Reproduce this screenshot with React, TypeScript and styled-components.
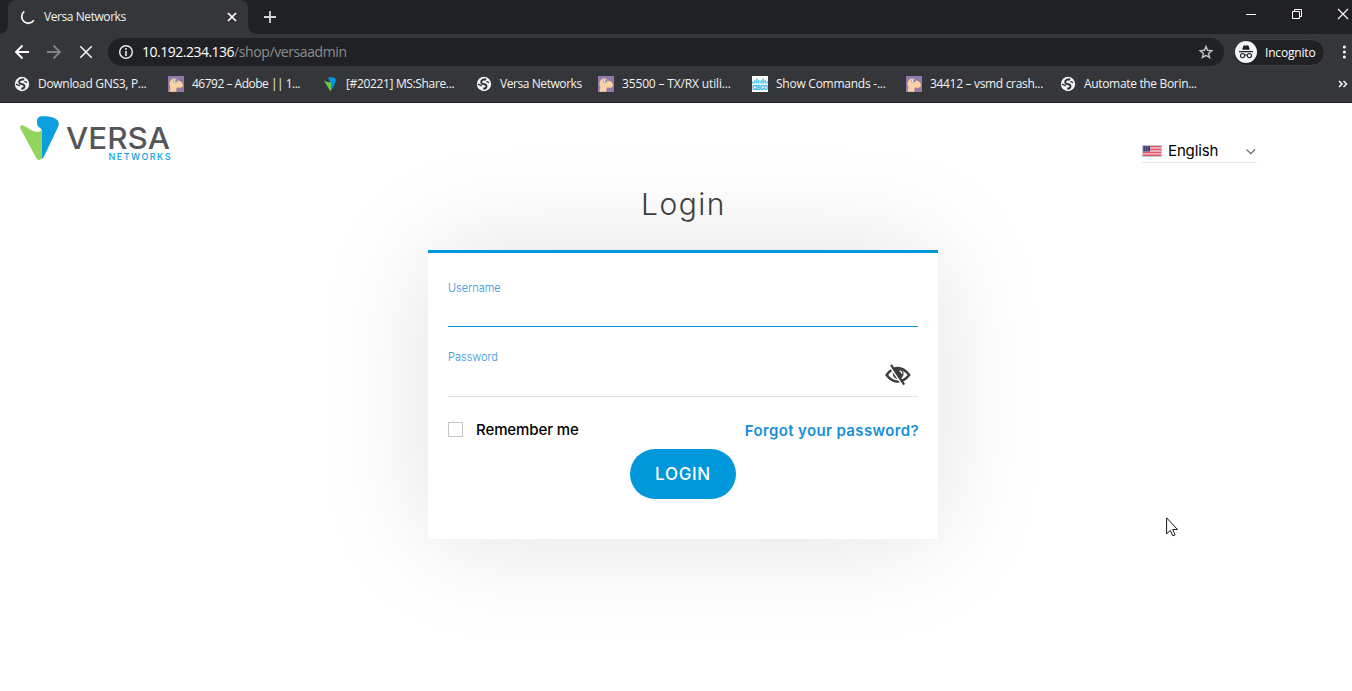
import * as React from 'react';
import styled, { createGlobalStyle } from "styled-components";

const GlobalStyle = createGlobalStyle`
  * {
    box-sizing: border-box;
  }
  body {
    margin: 0;
    background: #fff;
    overflow: hidden;
  }
  svg {
    display: block;
    flex: none;
  }
`;

const Window = styled.div`
  position: relative;
  width: 1352px;
  height: 691px;
  display: flex;
  flex-direction: column;
  font-family: "Open Sans", sans-serif;
  overflow: hidden;
`;

// ---------- browser chrome ----------

const TabStrip = styled.div`
  height: 34px;
  display: flex;
  align-items: center;
  background: #202124;
  padding-left: 8px;
`;

const Tab = styled.div`
  position: relative;
  width: 240px;
  height: 34px;
  display: flex;
  align-items: center;
  padding: 0 10px 0 12px;
  border-radius: 8px 8px 0 0;
  background: #35363a;
  color: #f1f3f4;

  &::before,
  &::after {
    content: "";
    position: absolute;
    bottom: 0;
    width: 8px;
    height: 8px;
  }
  &::before {
    left: -8px;
    background: radial-gradient(circle at 0 0, #202124 7.5px, #35363a 8px);
  }
  &::after {
    right: -8px;
    background: radial-gradient(circle at 100% 0, #202124 7.5px, #35363a 8px);
  }
`;

const TabTitle = styled.span`
  flex: 1;
  margin-left: 8px;
  font-size: 12px;
  line-height: 16px;
  letter-spacing: -0.43px;
`;

const NewTab = styled.div`
  margin-left: 16px;
`;

const WindowButtons = styled.div`
  margin: -6px 0 0 auto;
  display: flex;
  align-items: center;
  gap: 34px;
  padding-right: 3px;
`;

const Toolbar = styled.div`
  height: 36px;
  display: flex;
  align-items: center;
  background: #35363a;
  padding-left: 14px;
`;

const NavButtons = styled.div`
  display: flex;
  gap: 16px;
`;

const AddressBar = styled.div`
  width: 1116px;
  height: 28px;
  margin-left: 14px;
  display: flex;
  align-items: center;
  padding: 0 10px;
  border-radius: 14px;
  background: #202124;
`;

const Url = styled.span`
  flex: 1;
  margin-left: 8px;
  font-size: 14px;
  line-height: 20px;
  color: #fff;
  letter-spacing: -0.5px;

  span {
    color: #8b8e92;
    letter-spacing: -0.4px;
  }
`;

const IncognitoChip = styled.div`
  width: 92px;
  height: 27px;
  margin-left: 9px;
  display: flex;
  align-items: center;
  padding-left: 1px;
  border: 1px solid #404145;
  border-radius: 14px;
  background: #202124;
  color: #fff;
  font-size: 12px;
  letter-spacing: -0.18px;

  span {
    margin-left: 8px;
  }
`;

const MenuDots = styled.div`
  margin-left: 17px;
`;

const BookmarksBar = styled.div`
  height: 33px;
  display: flex;
  align-items: flex-start;
  padding: 6px 4px 0 14px;
  background: #35363a;
  border-bottom: 1px solid #202124;
  color: #f1f3f4;
`;

const Bookmark = styled.div<{ $width: number; $spacing: number }>`
  width: ${({ $width }) => $width}px;
  display: flex;
  align-items: center;
  gap: 8px;
  font-size: 12px;
  line-height: 16px;
  letter-spacing: ${({ $spacing }) => $spacing}px;
  white-space: nowrap;
`;

const Overflow = styled.div`
  margin: 4px 0 0 auto;
`;

// ---------- login page ----------

const Page = styled.main`
  flex: 1;
  display: flex;
  flex-direction: column;
  font-family: Inter, "Liberation Sans", sans-serif;
`;

const Header = styled.header`
  height: 75px;
  display: flex;
  justify-content: space-between;
  align-items: flex-start;
  padding: 13px 95px 0 20px;
`;

const Language = styled.div`
  width: 115px;
  height: 24px;
  margin-top: 23px;
  display: flex;
  align-items: center;
  border-bottom: 1px solid #e4e4e4;
  color: #000;
  font-size: 15px;

  span {
    flex: 1;
    margin-left: 6px;
    letter-spacing: -0.14px;
  }
`;

const LoginArea = styled.section`
  width: 510px;
  margin-left: 428px;
`;

const Title = styled.h1`
  position: relative;
  z-index: 1;
  margin: 0;
  height: 72px;
  padding: 8px 0 0 1px;
  text-align: center;
  font-size: 30px;
  font-weight: 300;
  line-height: 36px;
  letter-spacing: 1.5px;
  color: #3f3f3f;
`;

const Card = styled.form`
  height: 289px;
  padding: 24px 20px 0;
  border-top: 3px solid #0098db;
  background: #fff;
  box-shadow: 0 0 115px rgba(0, 0, 0, 0.12);
`;

const Field = styled.label<{ $active?: boolean }>`
  height: ${({ $active }) => ($active ? 50 : 70)}px;
  display: flex;
  justify-content: space-between;
  border-bottom: 1px solid ${({ $active }) => ($active ? "#0098db" : "#e2e2e2")};
  padding-top: ${({ $active }) => ($active ? 3 : 22)}px;
  color: #2f93d8;
  font-size: 11px;
  font-weight: 300;
  line-height: 16px;
`;

const EyeSlot = styled.div`
  margin: 15px 7px 0 0;
`;

const Options = styled.div`
  display: flex;
  height: 52px;
  padding-top: 23px;
  justify-content: space-between;
  font-size: 15px;
  line-height: 20px;
`;

const Remember = styled.div`
  display: flex;
  color: #000;
  font-weight: 500;
  letter-spacing: -0.1px;
`;

const Checkbox = styled.span`
  width: 15px;
  height: 15px;
  margin: 2px 13px 0 0;
  border: 1px solid #c8c8c8;
  background: #fff;
`;

const Forgot = styled.a`
  padding-top: 1px;
  margin-right: -1px;
  color: #148fd8;
  font-weight: 600;
  letter-spacing: 0.37px;
`;

const LoginButton = styled.button`
  display: block;
  width: 106px;
  height: 50px;
  margin: 0 auto;
  padding: 0;
  border: 0;
  border-radius: 25px;
  background: #0098db;
  color: #fff;
  font-family: inherit;
  font-size: 17px;
  font-weight: 500;
  letter-spacing: 0.7px;
`;

const Cursor = styled.svg`
  position: absolute;
  left: 1166px;
  top: 517px;
`;

const GlobeIcon = () => (
    <svg width="16" height="16" viewBox="0 0 16 16">
        <circle cx="8" cy="8" r="7.2" fill="#f1f3f4" />
        <path
            d="M10.2 3.2C8 3.2 5.2 3.8 5.2 6c0 1.9 1.4 2.1 3 2.3 1.5.2 2.5.8 2.3 2.2-.2 1.6-1.5 2.2-3.3 2.3"
            fill="none"
            stroke="#35363a"
            strokeWidth="1.9"
        />
        <path d="M2 8.2 6 9.9M10.4 5.4 13 6.6" stroke="#35363a" strokeWidth="1.4" />
    </svg>
);

const CamelIcon = () => (
    <svg width="16" height="16" viewBox="0 0 16 16">
        <path d="M0 0h16v16H0z" fill="#9478b0" />
        <path
            d="M1.2 16 2 11C.7 8.5.8 5 3.3 3.5 4.6 1.6 8.2 1.5 9.3 4.2c3.6.2 6.2 2.5 6 5.3-.3 2.6-2.5 3.2-5 2.7l-1.4-.2-.2 4z"
            fill="#f9d3a7"
            stroke="#765c78"
            strokeWidth=".4"
        />
        <circle cx="7.3" cy="5" r="2" fill="#eee" stroke="#7b858b" strokeWidth=".5" />
        <circle cx="8" cy="5" r=".8" fill="#303540" />
        <path d="M9 12q3.4.8 5.6-.8" fill="none" stroke="#ae8370" strokeWidth=".7" />
    </svg>
);

const VersaIcon = () => (
    <svg width="16" height="16" viewBox="0 0 16 16">
        <path d="M6.3 1.6C8.7 1 14 1.4 14 4.1c-.8 4-3 7.7-5.2 11V5.8L7 4.2z" fill="#0099de" />
        <path d="M2 4.5q4 2.6 7 1.5v9L7.5 14z" fill="#69c84a" />
    </svg>
);

const CiscoIcon = () => (
    <svg width="16" height="16" viewBox="0 0 16 16">
        <path d="M0 0h16v16H0z" fill="#fff" />
        <path
            d="M.9 5.5v2M2.9 4.2v3.3M4.9 2.6v5M6.9 4.2v3.3M9.1 4.2v3.3M11.1 2.6v5M13.1 4.2v3.3M15.1 5.5v2"
            stroke="#11b5dc"
            strokeWidth="1.2"
        />
        <text x=".3" y="14" fontFamily="Liberation Sans" fontWeight="700" fontSize="6.4" fill="#11b5dc" stroke="#11b5dc" strokeWidth=".3" textLength="15.4" lengthAdjust="spacingAndGlyphs">CISCO</text>
    </svg>
);

const bookmarks = [
    { text: "Download GNS3, P...", icon: GlobeIcon, width: 154, spacing: -0.3 },
    { text: "46792 – Adobe || 1...", icon: CamelIcon, width: 154, spacing: -0.5 },
    { text: "[#20221] MS:Share...", icon: VersaIcon, width: 154, spacing: -0.35 },
    { text: "Versa Networks", icon: GlobeIcon, width: 122, spacing: -0.43 },
    { text: "35500 – TX/RX utili...", icon: CamelIcon, width: 154, spacing: -0.15 },
    { text: "Show Commands -...", icon: CiscoIcon, width: 154, spacing: -0.25 },
    { text: "34412 – vsmd crash...", icon: CamelIcon, width: 154, spacing: -0.32 },
    { text: "Automate the Borin...", icon: GlobeIcon, width: 154, spacing: -0.33 },
];

const BrowserTabs = () => (
    <TabStrip>
        <Tab>
            <svg width="16" height="16" viewBox="0 0 16 16">
                <path d="M4.3 2.4A6.6 6.6 0 1 0 13.8 11.3" fill="none" stroke="#f1f3f4" strokeWidth="1.8" />
            </svg>
            <TabTitle>Versa Networks</TabTitle>
            <svg width="12" height="12" viewBox="0 0 12 12">
                <path d="m2 2 8 8m0-8-8 8" stroke="#fff" strokeWidth="1.7" />
            </svg>
        </Tab>
        <NewTab>
            <svg width="12" height="12" viewBox="0 0 12 12">
                <path d="M6 0v12M0 6h12" stroke="#d5d7d9" strokeWidth="1.8" />
            </svg>
        </NewTab>
        <WindowButtons>
            <svg width="12" height="12" viewBox="0 0 12 12">
                <path d="M1 6.5h10" stroke="#fff" />
            </svg>
            <svg width="12" height="12" viewBox="0 0 12 12">
                <path d="M1.5 3.5h7v7h-7zM3.5 3.5v-2h7v7h-2" fill="none" stroke="#fff" />
            </svg>
            <svg width="12" height="12" viewBox="0 0 12 12">
                <path d="m1 1 10 10m0-10L1 11" stroke="#fff" strokeWidth="1.1" />
            </svg>
        </WindowButtons>
    </TabStrip>
);

const BrowserToolbar = () => (
    <Toolbar>
        <NavButtons>
            <svg width="16" height="16" viewBox="0 0 16 16">
                <path d="M15 8H2m6.5-6.5L2 8l6.5 6.5" fill="none" stroke="#fff" strokeWidth="1.9" />
            </svg>
            <svg width="16" height="16" viewBox="0 0 16 16">
                <path d="M1 8h13M7.5 1.5 14 8l-6.5 6.5" fill="none" stroke="#818286" strokeWidth="1.8" />
            </svg>
            <svg width="16" height="16" viewBox="0 0 16 16">
                <path d="m2.3 2.3 11.4 11.4m0-11.4L2.3 13.7" stroke="#f1f3f4" strokeWidth="1.6" />
            </svg>
        </NavButtons>
        <AddressBar>
            <svg width="16" height="16" viewBox="0 0 16 16">
                <circle cx="8" cy="8" r="6.3" fill="none" stroke="#e8eaed" strokeWidth="1.5" />
                <path d="M8 7v5M8 4.1v1.7" stroke="#e8eaed" strokeWidth="1.6" />
            </svg>
            <Url>10.192.234.136<span>/shop/versaadmin</span></Url>
            <svg width="16" height="16" viewBox="0 0 16 16">
                <path d="m8 2.4 1.6 3.9 4.2.4-3.2 2.8 1 4.1L8 11.4l-3.6 2.2 1-4.1-3.2-2.8 4.2-.4z" fill="none" stroke="#c3c5c8" strokeWidth="1.4" />
            </svg>
        </AddressBar>
        <IncognitoChip>
            <svg width="22" height="22" viewBox="0 0 22 22">
                <circle cx="11" cy="11" r="11" fill="#f1f3f4" />
                <path d="m7.2 8.8 1.2-4 1.2-.5 1.4.4 1.4-.4 1.2.5 1.2 4zM4 10h14v1.2H4z" fill="#202124" />
                <path d="M9.6 14.2q1.4-.8 2.8 0" fill="none" stroke="#202124" />
                <circle cx="7.6" cy="14.6" r="2.1" fill="none" stroke="#202124" strokeWidth="1.1" />
                <circle cx="14.4" cy="14.6" r="2.1" fill="none" stroke="#202124" strokeWidth="1.1" />
            </svg>
            <span>Incognito</span>
        </IncognitoChip>
        <MenuDots>
            <svg width="4" height="14" viewBox="0 0 4 14">
                <circle cx="2.4" cy="2" r="1.6" fill="#f1f3f4" />
                <circle cx="2.4" cy="7" r="1.6" fill="#f1f3f4" />
                <circle cx="2.4" cy="12" r="1.6" fill="#f1f3f4" />
            </svg>
        </MenuDots>
    </Toolbar>
);

const VersaLogo = () => (
    <svg width="152" height="46" viewBox="0 0 152 46">
        <path
            d="M17 4.6C17.3 1.8 19 .5 21.7.3c5-.4 12 .4 15.3 3.5 2.3 2.2 2.2 4.9.8 7.7L23.5 41.5 21.5 43V16.7c.6-1 .7-2.2-.1-3.4-1-1.4-3-1.6-3.8-3.7-.6-1.5-.8-3.2-.6-5z"
            fill="#0b9fe0"
        />
        <path
            d="M2.2 9.3c2.7 0 6.6 4.2 11.7 6 3 1 6.3 1 7.8-2v29.1c-1.7 2.1-4.3 1.9-5.3-.2L.4 12.5C-.4 10.8.6 9.2 2.2 9.3z"
            fill="#93d45f"
        />
        <text x="46" y="33" fontFamily="Inter" fontSize="30" fontWeight="500" fill="#55565b" textLength="104" lengthAdjust="spacingAndGlyphs">VERSA</text>
        <text x="88.5" y="43.6" fontFamily="Inter" fontSize="9" fontWeight="500" fill="#0b9fe0" textLength="62">NETWORKS</text>
    </svg>
);

const UsFlag = () => (
    <svg width="20" height="12" viewBox="0 0 20 12">
        <path d="M0 0h20v12H0z" fill="#f2c9d0" />
        <path d="M0 1.5h20M0 4.5h20M0 7.5h20M0 10.3h20" stroke="#e3566c" strokeWidth="1.4" />
        <path d="M0 .8h8v5.7H0z" fill="#39457c" />
        <path d="M1 2h6M1 4h6M1 5.7h6" stroke="#8c96bc" strokeWidth=".7" strokeDasharray="1 1" />
        <path d="M.5.5h19v11H.5z" fill="none" stroke="#c7c3c7" />
    </svg>
);

const EyeSlash = () => (
    <svg width="26" height="22" viewBox="0 0 26 22">
        <path d="M1.6 11Q6.6 4 12.8 4t11.4 7Q19 17.6 12.8 17.6T1.6 11z" fill="none" stroke="#3d3d3d" strokeWidth="2.4" />
        <circle cx="13.2" cy="9.6" r="5.4" fill="#3d3d3d" />
        <path d="M14.6 6.9q2.2.5 2.2 2.8" fill="none" stroke="#fff" strokeWidth="1.3" />
        <path d="m4.6 2 12.8 19" stroke="#fff" strokeWidth="1.7" />
        <path d="m6 .8 13.2 19.8" stroke="#3d3d3d" strokeWidth="2.2" />
    </svg>
);

const App = () => {
    return (
        <Window>
            <GlobalStyle />
            <BrowserTabs />
            <BrowserToolbar />
            <BookmarksBar>
                {bookmarks.map(({ text, icon: Icon, width, spacing }) => (
                    <Bookmark key={text} $width={width} $spacing={spacing}>
                        <Icon />
                        {text}
                    </Bookmark>
                ))}
                <Overflow>
                    <svg width="10" height="8" viewBox="0 0 10 8">
                        <path d="m1 1 3 3-3 3m4.5-6 3 3-3 3" fill="none" stroke="#f1f3f4" strokeWidth="1.6" />
                    </svg>
                </Overflow>
            </BookmarksBar>
            <Page>
                <Header>
                    <VersaLogo />
                    <Language>
                        <UsFlag />
                        <span>English</span>
                        <svg width="12" height="8" viewBox="0 0 12 8">
                            <path d="m1.5 2.5 4.3 4.2 4.3-4.2" fill="none" stroke="#666" strokeWidth="1.1" />
                        </svg>
                    </Language>
                </Header>
                <LoginArea>
                    <Title>Login</Title>
                    <Card>
                        <Field $active>Username</Field>
                        <Field>
                            Password
                            <EyeSlot>
                                <EyeSlash />
                            </EyeSlot>
                        </Field>
                        <Options>
                            <Remember>
                                <Checkbox />
                                Remember me
                            </Remember>
                            <Forgot>Forgot your password?</Forgot>
                        </Options>
                        <LoginButton type="button">LOGIN</LoginButton>
                    </Card>
                </LoginArea>
            </Page>
            <Cursor width="13" height="20" viewBox="0 0 13 20">
                <path d="M.6.8v16.1l3.7-3.5 2.5 5.4 2.3-1-2.4-5.3h4.8z" fill="#fff" stroke="#171722" />
            </Cursor>
        </Window>
    );
};

export default App;
